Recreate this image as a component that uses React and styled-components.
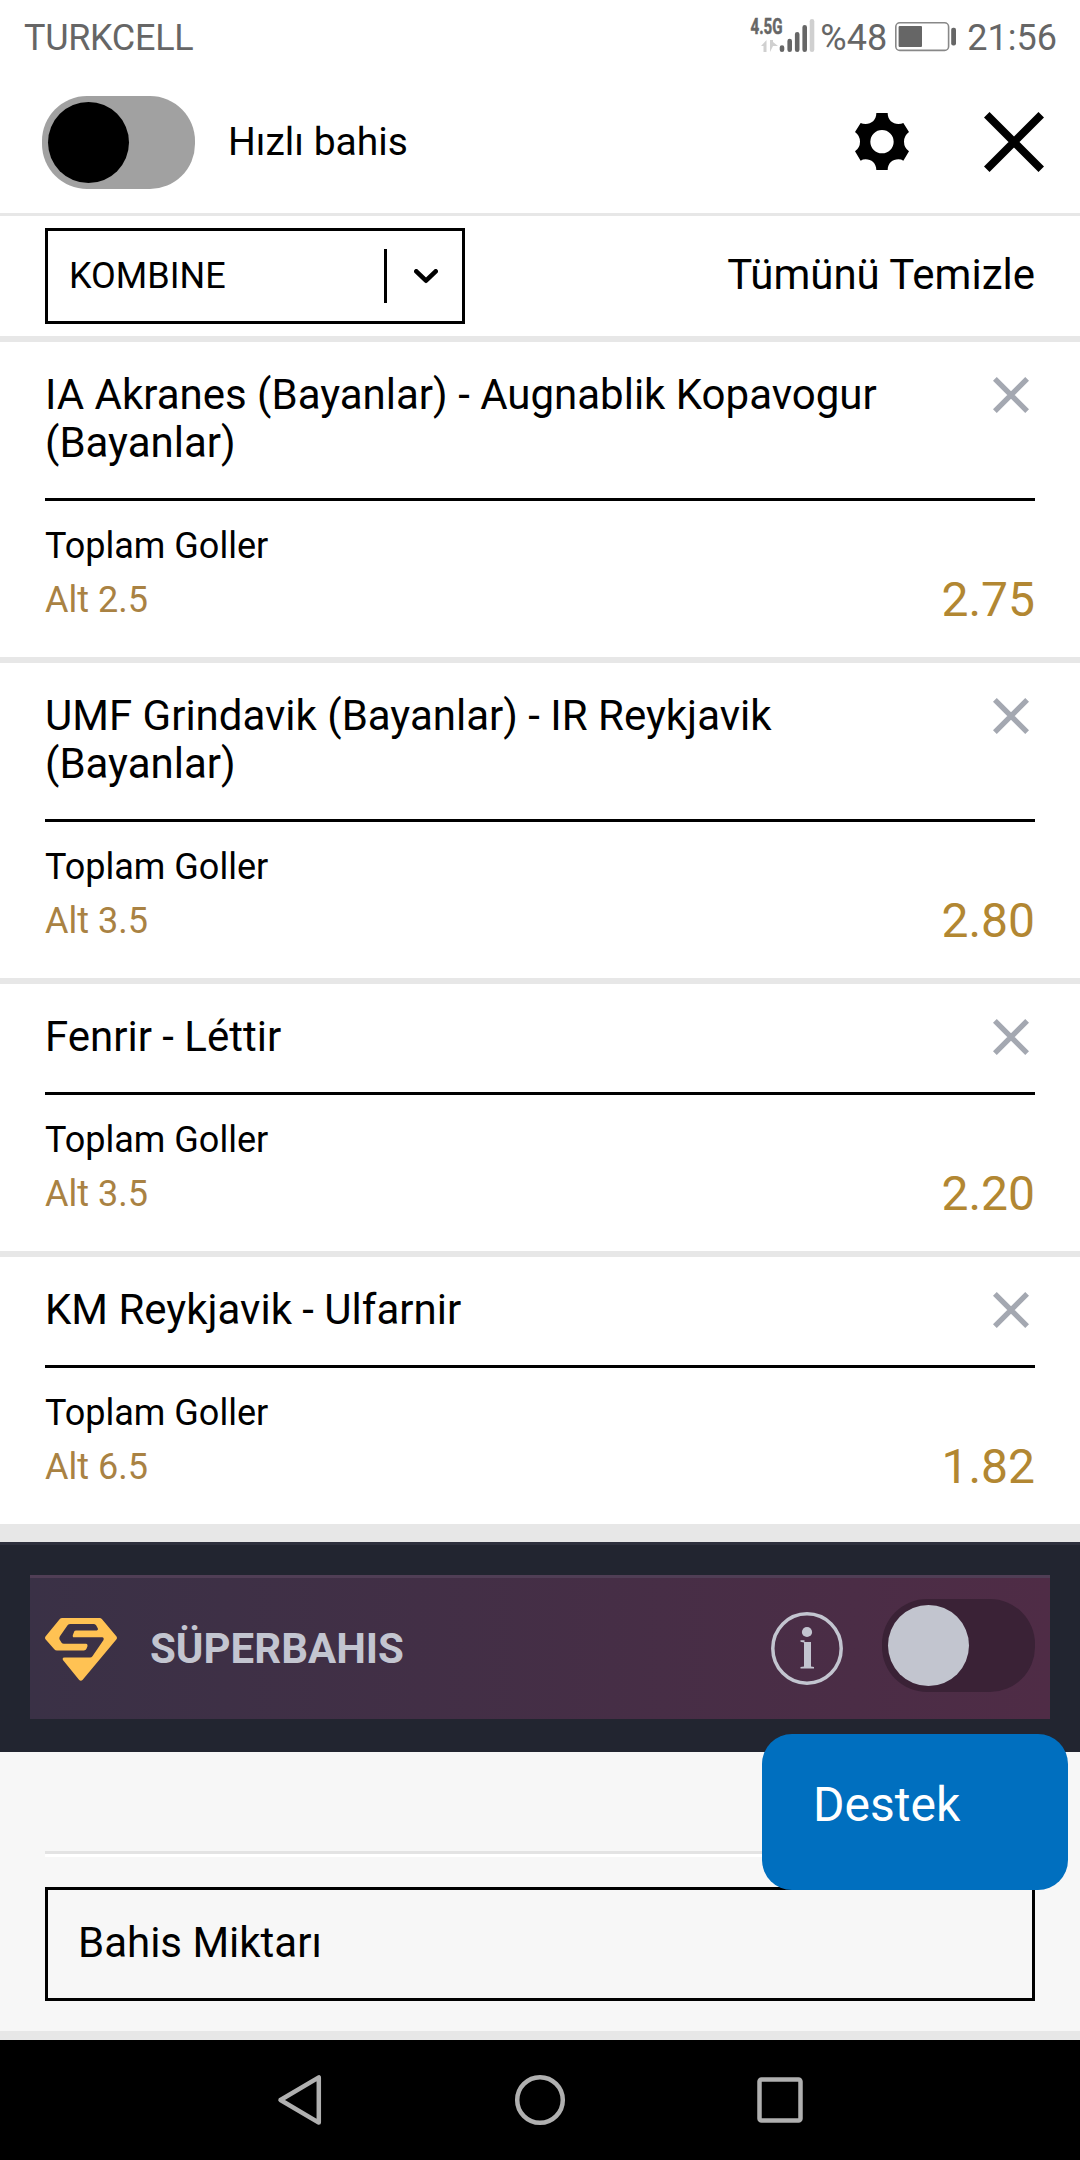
import React from 'react';
import styled, { createGlobalStyle } from 'styled-components';

const GlobalStyle = createGlobalStyle`
  * {
    box-sizing: border-box;
  }

  body {
    background: #fff;
    color: #000;
    font-family: Roboto, 'Noto Sans', sans-serif;
    margin: 0;
  }

  svg {
    display: block;
    flex: none;
  }
`

const Screen = styled.div`
  display: flex;
  flex-direction: column;
  height: 2160px;
  overflow: hidden;
  position: relative;
  width: 1080px;
`

const StatusBar = styled.div`
  align-items: flex-start;
  color: #666;
  display: flex;
  font-size: 36px;
  height: 75px;
  justify-content: space-between;
  line-height: 77px;
  padding: 0 23px 0 24px;

  .carrier {
    letter-spacing: -.3px;
  }

  .status-right {
    display: flex;
  }

  .battery-level {
    margin-left: 5px;
    width: 67px;
  }

  .battery {
    margin: 0 10px 0 8px;
  }
`

const Header = styled.div`
  align-items: center;
  border-bottom: 3px solid #e7e7e7;
  display: flex;
  height: 141px;
  padding: 0 36px 3px 42px;

  .quick-label {
    flex: 1;
    font-size: 39px;
    line-height: 46px;
    padding: 0 0 1px 33px;
  }

  .gear {
    margin: 0 75px 2px 0;
  }

  .close {
    margin-bottom: 2px;
  }
`

const Switch = styled.div`
  background: ${props => props.$track};
  border-radius: 45px;
  height: 93px;
  padding: 6px;
  width: 153px;

  &::before {
    background: ${props => props.$knob};
    border-radius: 50%;
    content: '';
    display: block;
    height: 81px;
    width: 81px;
  }
`

const Toolbar = styled.div`
  align-items: center;
  display: flex;
  height: 120px;
  justify-content: space-between;
  padding: 0 45px;
`

const BetType = styled.div`
  align-items: center;
  border: 3px solid #000;
  display: flex;
  font-size: 36px;
  height: 96px;
  line-height: 42px;
  padding: 0 24px 0 21px;
  width: 420px;

  .bet-type-name {
    flex: 1;
  }

  .bet-type-arrow {
    align-items: center;
    border-left: 3px solid #000;
    display: flex;
    height: 54px;
    padding-left: 27px;
  }
`

const ClearAll = styled.div`
  font-size: 42px;
  line-height: 48px;
  padding-bottom: 2px;
`

const Slip = styled.div`
  border-bottom: 12px solid #e7e7e7;
  border-top: 6px solid #e7e7e7;
`

const BetItem = styled.div`
  border-bottom: 6px solid #e7e7e7;
  padding: 29px 45px 30px;

  .bet-title {
    border-bottom: 3px solid #000;
    display: flex;
    font-size: 42px;
    justify-content: space-between;
    line-height: 48px;
    padding-bottom: 31px;
  }

  .bet-name {
    width: 860px;
  }

  .bet-remove {
    margin: 6px 6px 0 0;
  }

  .bet-detail {
    align-items: flex-end;
    display: flex;
    font-size: 36px;
    justify-content: space-between;
    line-height: 54px;
    padding-top: 18px;
  }

  .bet-pick {
    color: #a98243;
  }

  .bet-odd {
    color: #b28732;
    font-size: 48px;
  }
`

const SuperBet = styled.div`
  background: #222530;
  border-top: 3px solid #2e303d;
  height: 210px;
  padding: 30px;

  .super-panel {
    align-items: center;
    background: linear-gradient(90deg, #3a3146, #4f2c46);
    border-top: 3px solid #503e55;
    display: flex;
    height: 144px;
    padding: 0 15px;
  }

  .super-logo {
    margin-top: 2px;
  }

  .super-name {
    color: #c3c5d0;
    flex: 1;
    font-size: 42px;
    font-weight: 700;
    line-height: 48px;
    padding-left: 33px;
  }

  .super-info {
    margin-right: 39px;
  }

  ${Switch} {
    margin-bottom: 6px;
  }
`

const Stake = styled.div`
  background: #f7f7f7;
  border-bottom: 9px solid #e7e7e7;
  height: 288px;
  padding: 99px 45px 0;

  .stake-line {
    background: #fff;
    border-top: 3px solid #e3e3e3;
    height: 6px;
  }

  .stake-input {
    border: 3px solid #000;
    font-size: 42px;
    height: 114px;
    line-height: 105px;
    margin-top: 30px;
    padding-left: 30px;
  }
`

const Support = styled.div`
  background: #006fbf;
  border-radius: 30px;
  color: #fff;
  font-size: 48px;
  height: 156px;
  left: 762px;
  line-height: 141px;
  padding-left: 51px;
  position: absolute;
  top: 1734px;
  width: 306px;
`

const NavBar = styled.div`
  align-items: center;
  background: #000;
  display: flex;
  height: 120px;
  justify-content: center;
  gap: 188px;
`

const bets = [
  { name: 'IA Akranes (Bayanlar) - Augnablik Kopavogur (Bayanlar)', pick: 'Alt 2.5', odd: '2.75' },
  { name: 'UMF Grindavik (Bayanlar) - IR Reykjavik (Bayanlar)', pick: 'Alt 3.5', odd: '2.80' },
  { name: 'Fenrir - Léttir', pick: 'Alt 3.5', odd: '2.20' },
  { name: 'KM Reykjavik - Ulfarnir', pick: 'Alt 6.5', odd: '1.82' },
];

const SignalIcon = () => (
  <svg width="65" height="75" viewBox="-1 0 65 75">
    <text x="-0.5" y="34" fill="#666" stroke="#666" strokeWidth="0.5" fontSize="21.5" fontWeight="700" textLength="32" lengthAdjust="spacingAndGlyphs">4.5G</text>
    <path d="M15.5 40v12h-3v-6H10zM19 40v12l3-6h5l-5-4v-2z" fill="#d0d0d0" />
    <g strokeWidth="4.6" strokeLinecap="round" stroke="#666">
      <path d="M31 47.6v2.1M38.7 41v8.7M46.2 34.3v15.4M53.7 27.3v22.4" />
      <path d="M61 21.3v28.4" stroke="#d0d0d0" />
    </g>
  </svg>
);

const BatteryIcon = () => (
  <svg className="battery" width="62" height="75" viewBox="0 0 62 75">
    <rect x="0.8" y="22.8" width="52.8" height="27.6" rx="4" fill="none" stroke="#888" strokeWidth="1.6" />
    <rect x="3.6" y="26" width="23.4" height="21" rx="1" fill="#666" />
    <rect x="56.2" y="27.7" width="4.8" height="17.8" rx="2" fill="#666" />
  </svg>
);

const GearIcon = () => (
  <svg className="gear" width="54" height="57" viewBox="45 39 162 171">
    <path fillRule="evenodd" d="M109 39H143C143 60 158 72 175 72Q184 72 190 69L207 96Q192 107 192 125Q192 143 207 154L190 182Q184 178 175 178C158 178 143 190 143 210H109C109 190 94 178 77 178Q68 178 62 182L45 154Q60 143 60 125Q60 107 45 96L62 69Q68 72 77 72C94 72 109 60 109 39ZM126 90a35 35 0 1 0 0 70a35 35 0 1 0 0-70Z" />
  </svg>
);

const CrossIcon = ({ className, size, color, weight }) => {
  const a = weight * 0.354;
  const b = size - a;
  return (
    <svg className={className} width={size} height={size} viewBox={`0 0 ${size} ${size}`}>
      <path d={`M${a} ${a}L${b} ${b}M${b} ${a}L${a} ${b}`} stroke={color} strokeWidth={weight} />
    </svg>
  );
};

const ChevronIcon = () => (
  <svg width="24" height="15" viewBox="0 0 24 15">
    <path d="M2.3 2.3L12 11.7L21.7 2.3" fill="none" stroke="#000" strokeWidth="4.6" strokeLinecap="round" strokeLinejoin="round" />
  </svg>
);

const SuperIcon = () => (
  <svg className="super-logo" width="72" height="63" viewBox="30 39 217 190">
    <path
      d="M82 39H194Q199 39 202 43L245 94Q249 99 245 104L143 226Q138 231 133 226L84 166Q81 158 89 158H166Q170 158 173 154L206 106Q209 98 203 97H115Q113 96 114 90L118 80Q119 77 124 77H186Q191 76 189 70L184 61Q181 57 176 57H107Q101 57 98 61L75 94Q72 99 74 104L80 114Q82 117 87 117H154Q159 118 158 124L155 132Q153 137 147 137H66Q61 137 58 133L32 104Q28 99 32 94L74 43Q77 39 82 39Z"
      fill="#ffc253"
    />
  </svg>
);

const InfoIcon = () => (
  <svg className="super-info" width="72" height="73" viewBox="0 0 72 73">
    <ellipse cx="36" cy="36.5" rx="34.2" ry="34.7" fill="none" stroke="#c3c5d0" strokeWidth="3.5" />
    <circle cx="36" cy="20" r="5.1" fill="#c3c5d0" />
    <path d="M29.5 28.2H33.5V30H40V54.5L43 55V56.5H29.5V55L33 54.5V30.5L29.5 29.8Z" fill="#c3c5d0" />
  </svg>
);

const App = () => {
  return (
    <Screen>
      <GlobalStyle />
      <StatusBar>
        <span className="carrier">TURKCELL</span>
        <div className="status-right">
          <SignalIcon />
          <span className="battery-level">%48</span>
          <BatteryIcon />
          <span>21:56</span>
        </div>
      </StatusBar>
      <Header>
        <Switch $track="#a1a1a1" $knob="#000" />
        <div className="quick-label">Hızlı bahis</div>
        <GearIcon />
        <CrossIcon className="close" size={60} color="#000" weight={7.8} />
      </Header>
      <Toolbar>
        <BetType>
          <span className="bet-type-name">KOMBINE</span>
          <span className="bet-type-arrow"><ChevronIcon /></span>
        </BetType>
        <ClearAll>Tümünü Temizle</ClearAll>
      </Toolbar>
      <Slip>
        {bets.map(bet => (
          <BetItem key={bet.name}>
            <div className="bet-title">
              <div className="bet-name">{bet.name}</div>
              <CrossIcon className="bet-remove" size={36} color="#a4a8b1" weight={5.3} />
            </div>
            <div className="bet-detail">
              <div>
                <div>Toplam Goller</div>
                <div className="bet-pick">{bet.pick}</div>
              </div>
              <div className="bet-odd">{bet.odd}</div>
            </div>
          </BetItem>
        ))}
      </Slip>
      <SuperBet>
        <div className="super-panel">
          <SuperIcon />
          <div className="super-name">SÜPERBAHIS</div>
          <InfoIcon />
          <Switch $track="#3a2236" $knob="#c2c5cf" />
        </div>
      </SuperBet>
      <Stake>
        <div className="stake-line" />
        <div className="stake-input">Bahis Miktarı</div>
      </Stake>
      <NavBar>
        <svg width="52" height="52" viewBox="0 0 52 52">
          <path d="M44.8 3.4V48.6L6.5 26Z" fill="none" stroke="#b0b0b0" strokeWidth="4.5" strokeLinejoin="round" />
        </svg>
        <svg width="52" height="52" viewBox="0 0 52 52">
          <circle cx="26" cy="26" r="22.8" fill="none" stroke="#b0b0b0" strokeWidth="4.5" />
        </svg>
        <svg width="52" height="52" viewBox="0 0 52 52">
          <rect x="5.5" y="5.5" width="41" height="41" rx="2" fill="none" stroke="#b0b0b0" strokeWidth="4.5" />
        </svg>
      </NavBar>
      <Support>Destek</Support>
    </Screen>
  );
}

export default App;
